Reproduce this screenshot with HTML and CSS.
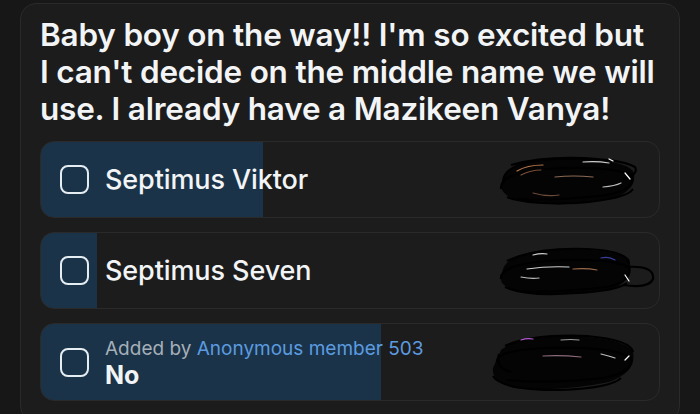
FILE: index.html
```html
<!DOCTYPE html>
<html lang="en">
  <head>
    <meta charset="UTF-8" />
    <meta name="viewport" content="width=device-width, initial-scale=1.0" />
    <title>Poll</title>
    <link rel="stylesheet" href="styles.css">
  </head>
  <body>
    <main class="poll">
      <h2 class="poll_title">
        Baby boy on the way!! I'm so excited but<br />
        I can't decide on the middle name we will<br />
        use. I already have a Mazikeen Vanya!
      </h2>

      <div class="poll_options">
        <div class="option" style="--votes: 36%">
          <span class="option_check"></span>
          <div class="option_text">
            <p class="option_name">Septimus Viktor</p>
          </div>
          <svg class="option_scribble" width="142" height="54" viewBox="0 0 142 54">
            <path d="M8 22 Q20 4 70 6 Q126 6 136 18 Q142 34 120 44 Q80 54 36 50 Q4 46 4 32 Z" fill="#040404" />
            <g fill="none" stroke="#000" stroke-width="2.2">
              <path d="M6 28 Q8 8 60 6 Q120 4 138 14 Q142 22 126 26" />
              <path d="M4 36 Q2 20 50 16 Q110 12 134 22 Q140 36 110 42 Q60 48 20 46" />
              <path d="M10 44 Q30 52 80 50 Q130 46 136 36" />
              <path d="M14 12 Q50 2 100 6" />
            </g>
            <g fill="none" stroke-width="1.2" stroke-linecap="round">
              <path d="M20 18 Q30 12 46 12" stroke="#b9774b" />
              <path d="M24 22 Q34 17 44 17" stroke="#7a5038" />
              <path d="M58 24 Q76 22 96 24" stroke="#8a6a55" />
              <path d="M86 9 Q100 8 112 10" stroke="#cfcfcf" />
              <path d="M106 34 Q118 33 124 30" stroke="#bdbdbd" />
              <path d="M36 40 Q50 44 62 42" stroke="#6a4a3a" />
              <path d="M128 20 L133 26" stroke="#fff" />
              <path d="M112 6 L116 8" stroke="#fff" />
            </g>
          </svg>
        </div>

        <div class="option" style="--votes: 9%">
          <span class="option_check"></span>
          <div class="option_text">
            <p class="option_name">Septimus Seven</p>
          </div>
          <svg class="option_scribble option_scribble--wide" width="158" height="52" viewBox="0 0 158 52">
            <path d="M6 24 Q12 6 64 4 Q118 4 132 14 Q138 34 116 44 Q70 52 30 48 Q2 44 4 32 Z" fill="#040404" />
            <g fill="none" stroke="#000" stroke-width="2.2">
              <path d="M10 16 Q40 2 90 4 Q130 6 132 18" />
              <path d="M4 34 Q2 20 50 16 Q110 12 132 22 Q136 36 110 42 Q60 48 20 46" />
              <path d="M8 42 Q30 52 80 48 Q120 46 130 38" />
              <path d="M128 22 Q158 20 156 34 Q152 44 126 40" />
            </g>
            <g fill="none" stroke-width="1.2" stroke-linecap="round">
              <path d="M30 24 Q50 21 72 22" stroke="#d0d0d0" />
              <path d="M76 24 Q90 23 100 25" stroke="#9a6a4a" />
              <path d="M104 13 Q112 11 118 15" stroke="#3a3f9a" />
              <path d="M24 32 Q34 34 42 33" stroke="#bdbdbd" />
              <path d="M36 10 Q44 8 50 9" stroke="#cfcfcf" />
              <path d="M128 30 L132 36" stroke="#fff" />
            </g>
          </svg>
        </div>

        <div class="option" style="--votes: 55%">
          <span class="option_check"></span>
          <div class="option_text">
            <p class="option_meta">Added by <span class="option_author">Anonymous member 503</span></p>
            <p class="option_name option_name--bold">No</p>
          </div>
          <svg class="option_scribble" width="148" height="60" viewBox="0 0 148 60">
            <path d="M10 18 Q30 2 80 4 Q134 6 142 20 Q146 40 118 50 Q70 60 24 56 Q0 50 2 36 Z" fill="#040404" />
            <g fill="none" stroke="#000" stroke-width="2.2">
              <path d="M14 14 Q40 2 96 4 Q140 8 142 20" />
              <path d="M6 30 Q4 18 56 16 Q120 14 140 26 Q144 40 112 46 Q60 52 16 48" />
              <path d="M2 44 Q10 58 70 58 Q120 56 130 46" />
              <path d="M8 22 Q4 36 20 40" />
            </g>
            <g fill="none" stroke-width="1.2" stroke-linecap="round">
              <path d="M30 8 Q36 6 42 7" stroke="#b25ad0" />
              <path d="M52 24 Q70 23 90 25" stroke="#8a6a7a" />
              <path d="M110 22 Q118 24 124 26" stroke="#bdbdbd" />
              <path d="M134 28 L138 24" stroke="#fff" />
              <path d="M70 8 Q80 7 88 8" stroke="#9a9a9a" />
            </g>
          </svg>
        </div>
      </div>
    </main>
  </body>
</html>
```

FILE: styles.css
```css
/* variables */
:root {
  --pageColor: #171717;
  --cardColor: #1c1c1c;
  --lineColor: #2a2a2a;
  --fillColor: #1a3348;
  --textColor: #f2f4f6;
  --mutedColor: #a6afb8;
  --linkColor: #5c9be0;
}

/* base */
*,
::before,
::after {
  box-sizing: border-box;
  margin: 0;
  padding: 0;
}
body {
  background-color: var(--pageColor);
  color: var(--textColor);
  font-family: Inter, "Noto Sans", sans-serif;
  overflow: hidden;
}

/* poll card */
.poll {
  margin: 3px 20px 0;
  padding: 12px 19px 20px;
  background-color: var(--cardColor);
  border: 1px solid var(--lineColor);
  border-radius: 16px;
}
.poll_title {
  font-size: 31.5px;
  line-height: 37px;
  font-weight: 600;
  letter-spacing: -0.2px;
  white-space: nowrap;
}

/* options */
.poll_options {
  display: flex;
  flex-direction: column;
  row-gap: 14px;
  margin-top: 14px;
}
.option {
  display: flex;
  align-items: center;
  min-height: 77px;
  padding: 8px 20px 8px 19px;
  border: 1px solid var(--lineColor);
  border-radius: 14px;
  background: linear-gradient(
    to right,
    var(--fillColor) var(--votes),
    var(--cardColor) var(--votes)
  );
}
.option_check {
  flex: none;
  width: 29px;
  height: 29px;
  border: 2.5px solid #e6edf2;
  border-radius: 8px;
}
.option_text {
  margin-left: 16px;
}
.option_name {
  font-size: 27px;
  font-weight: 500;
  line-height: 32px;
  letter-spacing: -0.1px;
}
.option_name--bold {
  font-size: 25px;
  font-weight: 700;
  line-height: 28px;
}
.option_meta {
  font-size: 19px;
  line-height: 25px;
  color: var(--mutedColor);
}
.option_author {
  color: var(--linkColor);
}
.option_scribble {
  flex: none;
  margin-left: auto;
}
.option_scribble--wide {
  margin-right: -16px;
}
```
